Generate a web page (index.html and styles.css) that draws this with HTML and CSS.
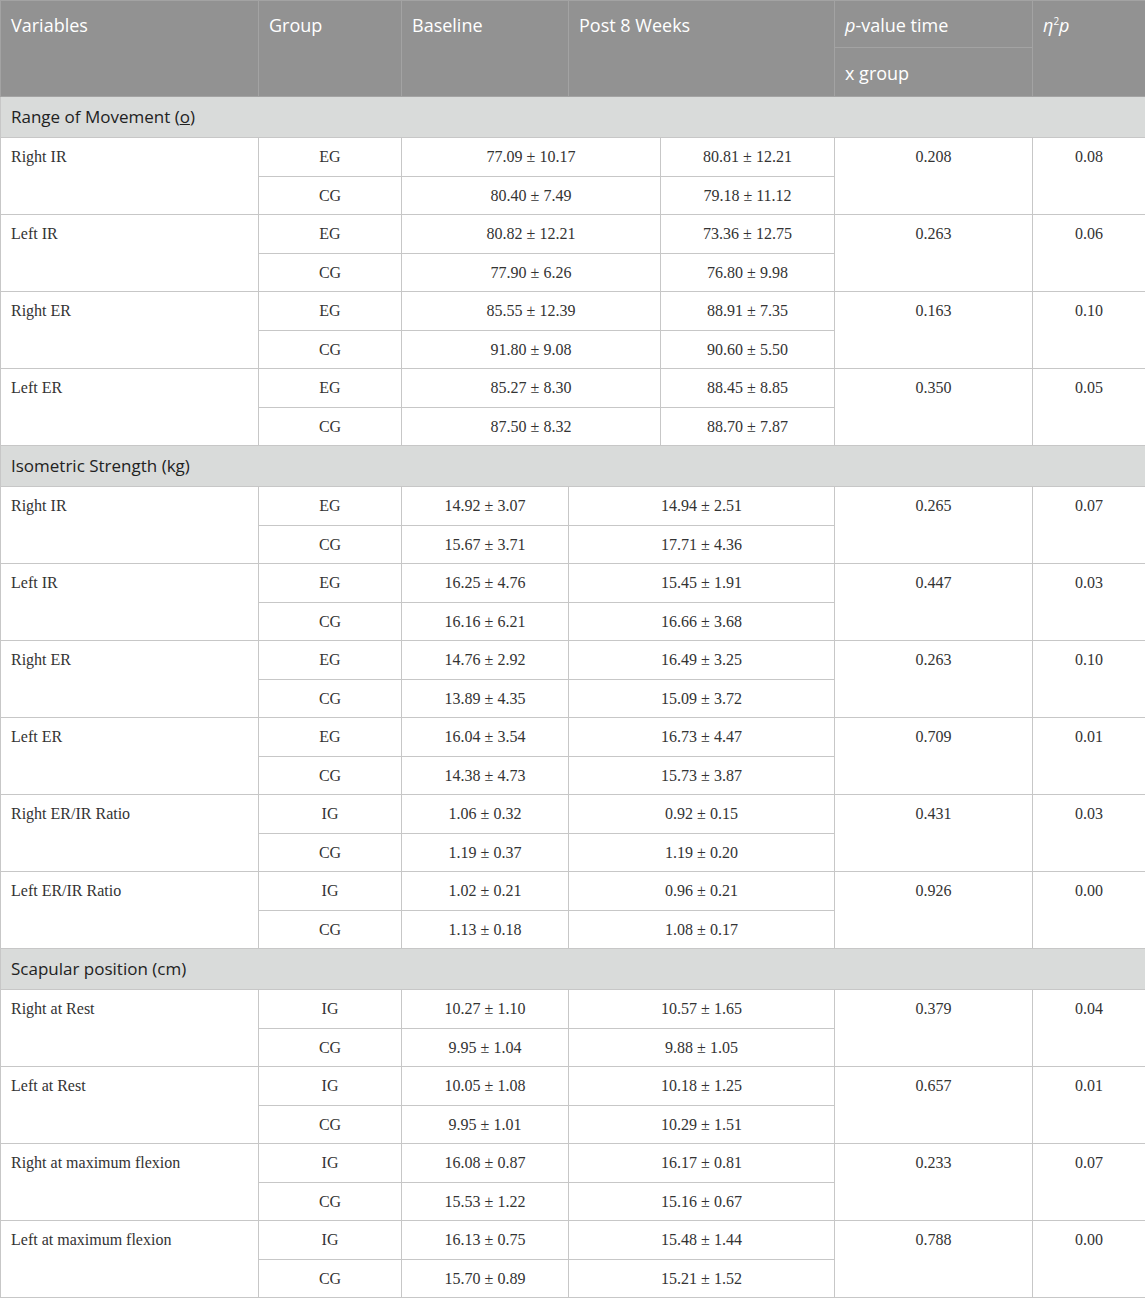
FILE: index.html
```html
<!DOCTYPE html>
<html>
<head>
<meta charset="utf-8">
<link rel="stylesheet" href="styles.css">
</head>
<body>
<table class="data">
<colgroup>
<col class="c1"><col class="c2"><col class="c3"><col class="c4"><col class="c5"><col class="c6"><col class="c7">
</colgroup>
<thead>
<tr class="h1">
<th rowspan="2">Variables</th>
<th rowspan="2">Group</th>
<th rowspan="2">Baseline</th>
<th rowspan="2" colspan="2">Post 8 Weeks</th>
<th><i>p</i>-value time</th>
<th rowspan="2"><i>η</i><sup>2</sup><i>p</i></th>
</tr>
<tr class="h2"><th>x group</th></tr>
</thead>
<tbody>
<tr class="sec"><td colspan="7">Range of Movement (<u>o</u>)</td></tr>
<tr class="r1"><td rowspan="2" class="var">Right IR</td><td>EG</td><td colspan="2">77.09 ± 10.17</td><td>80.81 ± 12.21</td><td rowspan="2">0.208</td><td rowspan="2">0.08</td></tr>
<tr class="r2"><td>CG</td><td colspan="2">80.40 ± 7.49</td><td>79.18 ± 11.12</td></tr>
<tr class="r1"><td rowspan="2" class="var">Left IR</td><td>EG</td><td colspan="2">80.82 ± 12.21</td><td>73.36 ± 12.75</td><td rowspan="2">0.263</td><td rowspan="2">0.06</td></tr>
<tr class="r2"><td>CG</td><td colspan="2">77.90 ± 6.26</td><td>76.80 ± 9.98</td></tr>
<tr class="r1"><td rowspan="2" class="var">Right ER</td><td>EG</td><td colspan="2">85.55 ± 12.39</td><td>88.91 ± 7.35</td><td rowspan="2">0.163</td><td rowspan="2">0.10</td></tr>
<tr class="r2"><td>CG</td><td colspan="2">91.80 ± 9.08</td><td>90.60 ± 5.50</td></tr>
<tr class="r1"><td rowspan="2" class="var">Left ER</td><td>EG</td><td colspan="2">85.27 ± 8.30</td><td>88.45 ± 8.85</td><td rowspan="2">0.350</td><td rowspan="2">0.05</td></tr>
<tr class="r2"><td>CG</td><td colspan="2">87.50 ± 8.32</td><td>88.70 ± 7.87</td></tr>

<tr class="sec"><td colspan="7">Isometric Strength (kg)</td></tr>
<tr class="r1"><td rowspan="2" class="var">Right IR</td><td>EG</td><td>14.92 ± 3.07</td><td colspan="2">14.94 ± 2.51</td><td rowspan="2">0.265</td><td rowspan="2">0.07</td></tr>
<tr class="r2"><td>CG</td><td>15.67 ± 3.71</td><td colspan="2">17.71 ± 4.36</td></tr>
<tr class="r1"><td rowspan="2" class="var">Left IR</td><td>EG</td><td>16.25 ± 4.76</td><td colspan="2">15.45 ± 1.91</td><td rowspan="2">0.447</td><td rowspan="2">0.03</td></tr>
<tr class="r2"><td>CG</td><td>16.16 ± 6.21</td><td colspan="2">16.66 ± 3.68</td></tr>
<tr class="r1"><td rowspan="2" class="var">Right ER</td><td>EG</td><td>14.76 ± 2.92</td><td colspan="2">16.49 ± 3.25</td><td rowspan="2">0.263</td><td rowspan="2">0.10</td></tr>
<tr class="r2"><td>CG</td><td>13.89 ± 4.35</td><td colspan="2">15.09 ± 3.72</td></tr>
<tr class="r1"><td rowspan="2" class="var">Left ER</td><td>EG</td><td>16.04 ± 3.54</td><td colspan="2">16.73 ± 4.47</td><td rowspan="2">0.709</td><td rowspan="2">0.01</td></tr>
<tr class="r2"><td>CG</td><td>14.38 ± 4.73</td><td colspan="2">15.73 ± 3.87</td></tr>
<tr class="r1"><td rowspan="2" class="var">Right ER/IR Ratio</td><td>IG</td><td>1.06 ± 0.32</td><td colspan="2">0.92 ± 0.15</td><td rowspan="2">0.431</td><td rowspan="2">0.03</td></tr>
<tr class="r2"><td>CG</td><td>1.19 ± 0.37</td><td colspan="2">1.19 ± 0.20</td></tr>
<tr class="r1"><td rowspan="2" class="var">Left ER/IR Ratio</td><td>IG</td><td>1.02 ± 0.21</td><td colspan="2">0.96 ± 0.21</td><td rowspan="2">0.926</td><td rowspan="2">0.00</td></tr>
<tr class="r2"><td>CG</td><td>1.13 ± 0.18</td><td colspan="2">1.08 ± 0.17</td></tr>

<tr class="sec"><td colspan="7">Scapular position (cm)</td></tr>
<tr class="r1"><td rowspan="2" class="var">Right at Rest</td><td>IG</td><td>10.27 ± 1.10</td><td colspan="2">10.57 ± 1.65</td><td rowspan="2">0.379</td><td rowspan="2">0.04</td></tr>
<tr class="r2"><td>CG</td><td>9.95 ± 1.04</td><td colspan="2">9.88 ± 1.05</td></tr>
<tr class="r1"><td rowspan="2" class="var">Left at Rest</td><td>IG</td><td>10.05 ± 1.08</td><td colspan="2">10.18 ± 1.25</td><td rowspan="2">0.657</td><td rowspan="2">0.01</td></tr>
<tr class="r2"><td>CG</td><td>9.95 ± 1.01</td><td colspan="2">10.29 ± 1.51</td></tr>
<tr class="r1"><td rowspan="2" class="var">Right at maximum flexion</td><td>IG</td><td>16.08 ± 0.87</td><td colspan="2">16.17 ± 0.81</td><td rowspan="2">0.233</td><td rowspan="2">0.07</td></tr>
<tr class="r2"><td>CG</td><td>15.53 ± 1.22</td><td colspan="2">15.16 ± 0.67</td></tr>
<tr class="r1"><td rowspan="2" class="var">Left at maximum flexion</td><td>IG</td><td>16.13 ± 0.75</td><td colspan="2">15.48 ± 1.44</td><td rowspan="2">0.788</td><td rowspan="2">0.00</td></tr>
<tr class="r2"><td>CG</td><td>15.70 ± 0.89</td><td colspan="2">15.21 ± 1.52</td></tr>
</tbody>
</table>
</body>
</html>
```
FILE: styles.css
```css
html, body {
  margin: 0;
  padding: 0;
  background: #ffffff;
}
.data {
  width: 1145px;
  border-collapse: collapse;
  table-layout: fixed;
  font-family: "Liberation Serif", "Times New Roman", serif;
  font-size: 16px;
  color: #333333;
}
.c1 { width: 258px; }
.c2 { width: 143px; }
.c3 { width: 167px; }
.c4 { width: 92px; }
.c5 { width: 174px; }
.c6 { width: 198px; }
.c7 { width: 113px; }

.data th, .data td {
  border: 1px solid #c7c7c7;
  padding: 0;
}
.data thead th {
  background: #929292;
  color: #ffffff;
  font-family: "Open Sans", "Noto Sans", sans-serif;
  font-weight: normal;
  font-size: 18px;
  text-align: left;
  vertical-align: top;
  padding: 12px 10px 0 10px;
  border-color: #a3a3a3;
  line-height: 24px;
}
.data thead th sup {
  font-size: 10px;
  line-height: 0;
}
.data thead .h1 th { height: 34px; }
.data thead .h2 th { height: 35px; padding-top: 13px; }

.data tbody td {
  text-align: center;
  vertical-align: top;
  padding-top: 10px;
  line-height: 18px;
}
.data tbody .sec td {
  background: #d9dbda;
  font-family: "Open Sans", "Noto Sans", sans-serif;
  font-size: 17px;
  color: #222222;
  height: 40px;
  padding: 0 10px;
  text-align: left;
  vertical-align: middle;
  line-height: 24px;
}
.data tbody .r1 td { height: 28px; }
.data tbody .r2 td { height: 27px; }
.data tbody td.var {
  text-align: left;
  padding-left: 10px;
}
```
